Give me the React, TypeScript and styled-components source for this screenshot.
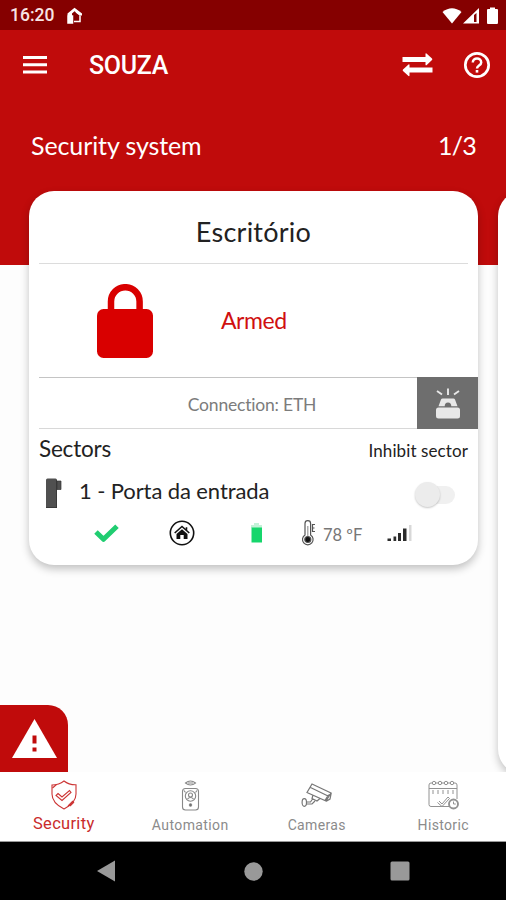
import React from "react";
import styled, { createGlobalStyle } from "styled-components";

const red = "#c00b0b";

const GlobalStyle = createGlobalStyle`
  * { box-sizing: border-box; }
  body { margin: 0; background: #fff; }
  svg { display: block; flex: none; }
`;

const Screen = styled.div`
  width: 506px;
  height: 900px;
  display: flex;
  flex-direction: column;
  overflow: hidden;
  background: #fff;
  font-family: Lato, sans-serif;
  font-variant-ligatures: none;
  color: #1c1c1c;
`;

const Label = styled.span<{ $size: number; $spacing?: number; $color?: string; $weight?: number; $roboto?: boolean }>`
  font-family: ${(p) => (p.$roboto ? "Roboto" : "Lato")}, sans-serif;
  font-size: ${(p) => p.$size}px;
  letter-spacing: ${(p) => p.$spacing ?? 0}px;
  color: ${(p) => p.$color ?? "#222"};
  font-weight: ${(p) => p.$weight ?? 400};
  line-height: 1.2;
  white-space: nowrap;
`;

const StatusBar = styled.header`
  height: 30px;
  flex: none;
  display: flex;
  align-items: center;
  padding: 1px 7px 0 10px;
  background: #850000;
`;

const HomeSlot = styled.div`
  margin-left: 13px;
`;

const StatusIcons = styled.div`
  display: flex;
  margin-left: auto;
`;

const AppBar = styled.div`
  height: 70px;
  flex: none;
  display: flex;
  align-items: center;
  padding: 0 15px 0 23px;
  background: ${red};
  box-shadow: 0 1px 1px rgba(110, 0, 0, 0.25);
`;

const Title = styled(Label)`
  margin: 2px auto 0 42px;
`;

const Actions = styled.div`
  display: flex;
  align-items: center;
  gap: 30px;
`;

const Content = styled.main`
  position: relative;
  height: 672px;
  flex: none;
  overflow: hidden;
  background: linear-gradient(${red} 165px, #fdfdfd 165px);
`;

const SectionHeading = styled.div`
  height: 91px;
  display: flex;
  justify-content: space-between;
  align-items: center;
  padding: 0 30px 2px 31px;
`;

const Carousel = styled.div`
  display: flex;
  align-items: flex-start;
  gap: 20px;
  padding-left: 29px;
`;

const Card = styled.section<{ $height: number }>`
  width: 449px;
  height: ${(p) => p.$height}px;
  flex: none;
  background: #fff;
  border-radius: 25px;
  box-shadow: 0 4px 9px rgba(0, 0, 0, 0.24);
`;

const CardTitle = styled.div`
  height: 73px;
  margin: 0 10px;
  display: flex;
  align-items: center;
  justify-content: center;
  padding-top: 10px;
  border-bottom: 1px solid #dcdcdc;
`;

const ArmedRow = styled.div`
  height: 114px;
  margin-left: 10px;
  display: flex;
  align-items: center;
  gap: 67px;
  padding-left: 58px;
  border-bottom: 1px solid #c4c4c4;
`;

const ConnectionRow = styled.div`
  height: 51px;
  display: flex;
  margin-left: 10px;
  border-bottom: 1px solid #d8d8d8;
`;

const ConnectionText = styled.div`
  flex: 1;
  display: flex;
  align-items: center;
  justify-content: center;
  padding-left: 48px;
  padding-top: 2px;
`;

const SirenButton = styled.button`
  width: 61px;
  height: 52px;
  margin-top: -1px;
  border: 0;
  padding: 0;
  display: grid;
  place-items: center;
  background: #6e6e6e;
`;

const SectorsHeader = styled.div`
  height: 41px;
  display: flex;
  justify-content: space-between;
  align-items: center;
  padding: 0 10px 2px;
`;

const InhibitLabel = styled(Label)`
  margin-top: 6px;
`;

const SectorRow = styled.div`
  height: 44px;
  display: flex;
  align-items: center;
  padding: 3px 23px 0 17px;
`;

const SectorName = styled(Label)`
  margin: -5px auto 0 17px;
`;

const Switch = styled.div`
  width: 40px;
  height: 18px;
  margin-top: 2px;
  border-radius: 9px;
  background: linear-gradient(90deg, transparent 12px, #f0f0f0 12px);
  display: flex;
  align-items: center;
`;

const Knob = styled.span`
  width: 25px;
  height: 25px;
  border-radius: 50%;
  background: #ececec;
  box-shadow: 0 1px 2px rgba(0, 0, 0, 0.22);
`;

const SectorStatus = styled.div`
  display: grid;
  grid-template-columns: 75px 75px 57px 86px 30px;
  align-items: center;
  height: 38px;
  padding-left: 65px;
`;

const BatterySlot = styled.div`
  padding-left: 7px;
`;

const Temperature = styled.div`
  display: flex;
  align-items: center;
  gap: 6px;
  ${Label} { margin-top: 6px; }
`;

const AlertTab = styled.button`
  position: absolute;
  left: 0;
  bottom: 0;
  width: 68px;
  height: 67px;
  border: 0;
  border-radius: 0 20px 0 0;
  padding: 1px 0 0;
  background: ${red};
  display: grid;
  place-items: center;
`;

const Tabs = styled.nav`
  height: 70px;
  flex: none;
  display: grid;
  grid-template-columns: repeat(4, 1fr);
  background: #fff;
  border-bottom: 1px solid #999;
`;

const Tab = styled.a`
  display: flex;
  flex-direction: column;
  align-items: center;
  justify-content: space-between;
  padding: 8px 0 7px 1px;
`;

const SystemBar = styled.footer`
  height: 58px;
  flex: none;
  display: flex;
  justify-content: space-between;
  align-items: center;
  padding: 0 96px 0 97px;
  background: #000;
`;

const HomeNotification = () => (
  <svg width="16" height="17" viewBox="0 0 16 17">
    <path d="M.5 6.500 7.500.8l7.500 5.700V8.500h-1.800L7.500 4.300 5 6.500v9.500H1V8.500H.5z" fill="#fff" />
    <path d="M1 9h4.500v7H1zM9 5l4 3M7 14.500h6V8.500" fill="#fff" fillOpacity=".0" stroke="#fff" strokeWidth="1.500" />
  </svg>
);

const StatusGlyphs = () => (
  <svg width="57" height="18" viewBox="442 6 57 18" fill="#fff">
    <path d="M442.500 11Q452 3.500 461.500 11L452 22.500Z" />
    <path d="M463 22.500 479 7v15.500zM474 14v7h2.500v-9z" fillRule="evenodd" />
    <path d="M487 9q0-1 1-1h2V6.500h5V8h2q1 0 1 1v12.500q0 1.500-1 1.500h-9q-1 0-1-1z" />
  </svg>
);

const MenuIcon = () => (
  <svg width="24" height="18" viewBox="0 0 24 18" fill="#fff">
    <path d="M0 0h24v3H0zM0 7.300h24v3H0zM0 14.600h24v3H0z" />
  </svg>
);

const SwapIcon = () => (
  <svg width="31" height="24" viewBox="0 0 30 24" fill="#fff">
    <path d="M0 4h23V1q0-1 1-.500l5.500 5q.7.800 0 1.500L24 12.200q-1 .5-1-.5V9H0zM30 14.500H7V12q0-1-1-.5L.5 16.500q-.7.800 0 1.500L6 23q1 .5 1-.5v-3h23z" />
  </svg>
);

const HelpIcon = () => (
  <svg width="28" height="28" viewBox="0 0 28 28" fill="none" stroke="#fff">
    <circle cx="14" cy="14" r="11.700" strokeWidth="2.700" />
    <path d="M9.800 11.500c0-5.300 8.400-5.300 8.400 0 0 3-4.200 3.200-4.200 6" strokeWidth="2.500" />
    <path d="M12.700 19h2.600v2.600h-2.600z" fill="#fff" stroke="none" />
  </svg>
);

const LockIcon = () => (
  <svg width="57" height="74" viewBox="0 0 57 74">
    <path d="M14 29V17.500a14.300 14.300 0 0 1 28.600 0V29" fill="none" stroke="#d90000" strokeWidth="6.500" />
    <rect x="0" y="25" width="56" height="49" rx="6.500" fill="#d90000" />
  </svg>
);

const SirenIcon = () => (
  <svg width="26" height="31" viewBox="0 0 26 31" fill="#e8e8e8">
    <path d="M13 .5v6.500M2 3l5 3.500M24 3l-5 3.500" fill="none" stroke="#e8e8e8" strokeWidth="1.900" />
    <path d="M7.500 10.500h11q1 0 1.500 1l2.500 6.700h-6.200q0-3.800-3.300-3.800t-3.300 3.800H3.500L6 11.500q.5-1 1.500-1z" />
    <rect x="1" y="19.500" width="24" height="11" rx="2.500" />
  </svg>
);

const DoorSensorIcon = () => (
  <svg width="16" height="31" viewBox="0 0 16 31" fill="#505050">
    <path d="M0 2q0-1.500 1.500-1.500h8q1.500 0 1.500 1.500V30H0z" />
    <path d="M11 3h4v8.500h-4z" stroke="#333" strokeWidth=".7" />
    <path d="M10.500 2v28M0 29.500h11" stroke="#333" strokeWidth=".8" />
  </svg>
);

const CheckIcon = () => (
  <svg width="25" height="20" viewBox="0 0 25 20">
    <path d="m2 9 7.500 7.300L23 3.200" fill="none" stroke="#20cd71" strokeWidth="5" strokeLinejoin="round" />
  </svg>
);

const HouseIcon = () => (
  <svg width="26" height="26" viewBox="0 0 26 26">
    <circle cx="13" cy="13" r="11.700" fill="none" stroke="#111" strokeWidth="1.600" />
    <path d="m5.700 13 7.300-6.500 7.300 6.500M17.500 7.200v2.500" fill="none" stroke="#111" strokeWidth="1.600" />
    <path d="m7.500 14 5.500-4.700 5.500 4.700v5h-3.800v-4h-3.400v4H7.500z" fill="#111" />
  </svg>
);

const BatteryIcon = () => (
  <svg width="12" height="22" viewBox="0 0 12 22">
    <path d="M3 1h5v2h3v3H0V3h3z" fill="#c3f2d8" />
    <path d="M.5 5.500H11v15H.5z" fill="#16d66c" />
  </svg>
);

const ThermometerIcon = () => (
  <svg width="16" height="26" viewBox="0 0 16 26" fill="none" stroke="#555" strokeWidth="1.200">
    <path d="M4 15V3.500a2.800 2.800 0 0 1 5.600 0V15a5.300 5.300 0 1 1-5.600 0z" />
    <path d="M6.800 6v13" stroke="#999" />
    <circle cx="6.800" cy="19.500" r="3" fill="#111" />
    <path d="M11.500 4.500h2.500M11.500 8h2M11.500 11.500h2.500M11.500 4v8" />
  </svg>
);

const SignalIcon = () => (
  <svg width="25" height="18" viewBox="0 0 25 18" fill="#2c2c2c">
    <path d="M.5 14.500H4V17H.500zM6.500 12.500h2.700V17H6.500zM11 9h3v8h-3zM16 4.500h3.500V17H16z" />
    <path d="M22 1h2.500v16H22z" fill="#d8d8d8" />
  </svg>
);

const WarningIcon = () => (
  <svg width="45" height="40" viewBox="0 0 45 40">
    <path d="M22.500 0 45 39H0z" fill="#fff" />
    <path d="M20.500 16.500h4v8h-4zM20.500 28.500h4v4h-4z" fill={red} />
  </svg>
);

const ShieldIcon = () => (
  <svg width="28" height="30" viewBox="0 0 28 30" fill="none" stroke="#cc3434" strokeWidth="1.100">
    <path d="M14 1q5 4 12 3.800V14c0 8-6 12-12 15C8 26 2 22 2 14V5q7 0 12-4z" />
    <path d="m8 13.500 4 3.500 7.500-6.500 1.500 2-9 8-6-5zM2.500 8l4-3.500M18 26l5-5M20 26l4-4" />
  </svg>
);

const RemoteIcon = () => (
  <svg width="19" height="31" viewBox="0 0 19 31" fill="none" stroke="#888" strokeWidth="1.100">
    <path d="M4.500 3q5-4 10 0-5 4-10 0zM7 3h5" />
    <rect x="1.500" y="8.500" width="16" height="21.500" rx="3" />
    <circle cx="9.500" cy="16" r="5.200" />
    <circle cx="9.500" cy="15" r="2" />
    <path d="M6.500 19q3-3 6 0M4.500 12.500l-1.500-2M14.500 12.500l1.500-2" />
    <circle cx="9.500" cy="25" r="1.200" fill="#666" />
  </svg>
);

const CameraIcon = () => (
  <svg width="31" height="30" viewBox="0 0 31 30" fill="none" stroke="#777" strokeWidth="1.200">
    <path d="M11 4 30 13l-5 8L6 12.500zM9.500 7.500 27 16M24 20.500l3-5 3-1.500-1 5-3.500 2zM12 15l-1 3.500 5 2.500 3-2.500M14 21l-3 3H5M5 22h4.500l2-3" />
    <ellipse cx="3.300" cy="22.500" rx="2.200" ry="3.800" />
  </svg>
);

const CalendarIcon = () => (
  <svg width="31" height="30" viewBox="0 0 31 30" fill="none" stroke="#929292" strokeWidth="1">
    <path d="M21 26.500H3q-2 0-2-2V5q0-2 2-2h24q2 0 2 2v14M1 8.500h28M5 10v4M10 10v4M15 10v4M20 10v4M25 10v4M11 21l3 3 6-7 1.500 1.500-7.500 8-4.500-4" />
    <g fill="#fff"><circle cx="6" cy="3" r="1.700" /><circle cx="12" cy="3" r="1.700" /><circle cx="18" cy="3" r="1.700" /><circle cx="24" cy="3" r="1.700" /></g>
    <circle cx="25.500" cy="24" r="4.500" fill="#fff" strokeWidth="1.900" />
    <path d="M25.500 21.500V24h2.300" />
  </svg>
);

const tabs = [
  { name: "Security", icon: <ShieldIcon />, color: "#c92b2b", size: 16.5, spacing: 0.3 },
  { name: "Automation", icon: <RemoteIcon />, color: "#8b8b8b", size: 14, spacing: 0.4 },
  { name: "Cameras", icon: <CameraIcon />, color: "#8b8b8b", size: 14, spacing: 0.35 },
  { name: "Historic", icon: <CalendarIcon />, color: "#8b8b8b", size: 14, spacing: 0.35 },
];

export default function App() {
  return (
    <>
      <GlobalStyle />
      <Screen>
        <StatusBar>
          <Label $size={17.5} $roboto $weight={500} $color="#f8e4e4">16:20</Label>
          <HomeSlot><HomeNotification /></HomeSlot>
          <StatusIcons><StatusGlyphs /></StatusIcons>
        </StatusBar>
        <AppBar>
          <MenuIcon />
          <Title $size={25} $roboto $color="#fff" $weight={500} $spacing={-0.3}>SOUZA</Title>
          <Actions><SwapIcon /><HelpIcon /></Actions>
        </AppBar>
        <Content>
          <SectionHeading>
            <Label $size={25} $color="#fff" $spacing={-0.1}>Security system</Label>
            <Label $size={25} $color="#fff" $spacing={-0.8}>1/3</Label>
          </SectionHeading>
          <Carousel>
            <Card $height={374}>
              <CardTitle><Label $size={27} $spacing={0.25}>Escritório</Label></CardTitle>
              <ArmedRow>
                <LockIcon />
                <Label $size={23} $color="#d01010" $spacing={-0.4}>Armed</Label>
              </ArmedRow>
              <ConnectionRow>
                <ConnectionText><Label $size={17.5} $color="#7c7c7c" $spacing={-0.2}>Connection: ETH</Label></ConnectionText>
                <SirenButton aria-label="Siren"><SirenIcon /></SirenButton>
              </ConnectionRow>
              <SectorsHeader>
                <Label $size={22.5} $spacing={-0.2}>Sectors</Label>
                <InhibitLabel $size={17} $spacing={0.1}>Inhibit sector</InhibitLabel>
              </SectorsHeader>
              <SectorRow>
                <DoorSensorIcon />
                <SectorName $size={22} $spacing={-0.1}>1 - Porta da entrada</SectorName>
                <Switch><Knob /></Switch>
              </SectorRow>
              <SectorStatus>
                <CheckIcon />
                <HouseIcon />
                <BatterySlot><BatteryIcon /></BatterySlot>
                <Temperature><ThermometerIcon /><Label $size={16.5} $color="#777">78 ºF</Label></Temperature>
                <SignalIcon />
              </SectorStatus>
            </Card>
            <Card $height={583} />
          </Carousel>
          <AlertTab aria-label="Alert"><WarningIcon /></AlertTab>
        </Content>
        <Tabs>
          {tabs.map((t) => (
            <Tab key={t.name}>
              {t.icon}
              <Label $roboto $size={t.size} $spacing={t.spacing} $color={t.color}>{t.name}</Label>
            </Tab>
          ))}
        </Tabs>
        <SystemBar>
          <svg width="19" height="22" viewBox="0 0 19 22"><path d="M0 11 18 .5v21z" fill="#999" /></svg>
          <svg width="19" height="19" viewBox="0 0 19 19"><circle cx="9.500" cy="9.500" r="9.200" fill="#999" /></svg>
          <svg width="20" height="20" viewBox="0 0 20 20"><rect x=".5" y=".5" width="19" height="19" rx="1.500" fill="#999" /></svg>
        </SystemBar>
      </Screen>
    </>
  );
}
